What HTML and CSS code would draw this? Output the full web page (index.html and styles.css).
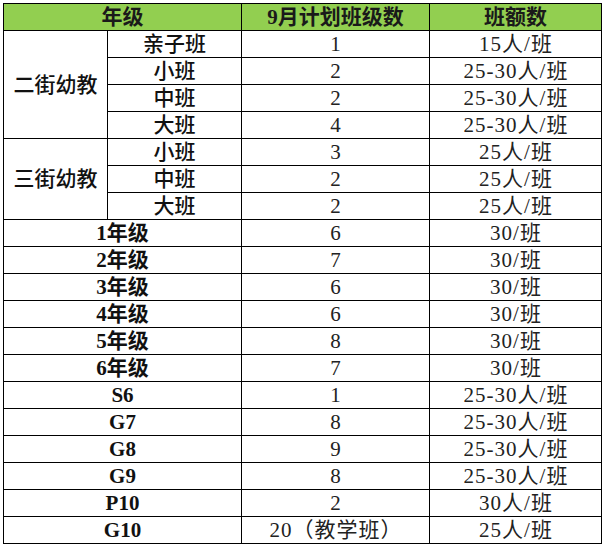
FILE: index.html
```html
<!DOCTYPE html>
<html lang="zh-CN">
<head>
<meta charset="utf-8">
<title>班级计划</title>
<link rel="stylesheet" href="styles.css">
</head>
<body>
<div class="sheet" role="table">
  <div class="cell head span2">年级</div>
  <div class="cell head">9月计划班级数</div>
  <div class="cell head">班额数</div>

  <div class="cell group r4">二街幼教</div>
  <div class="cell sub">亲子班</div><div class="cell num">1</div><div class="cell num">15人/班</div>
  <div class="cell sub">小班</div><div class="cell num">2</div><div class="cell num">25-30人/班</div>
  <div class="cell sub">中班</div><div class="cell num">2</div><div class="cell num">25-30人/班</div>
  <div class="cell sub">大班</div><div class="cell num">4</div><div class="cell num">25-30人/班</div>

  <div class="cell group r3">三街幼教</div>
  <div class="cell sub">小班</div><div class="cell num">3</div><div class="cell num">25人/班</div>
  <div class="cell sub">中班</div><div class="cell num">2</div><div class="cell num">25人/班</div>
  <div class="cell sub">大班</div><div class="cell num">2</div><div class="cell num">25人/班</div>

  <div class="cell grade span2">1年级</div><div class="cell num">6</div><div class="cell num">30/班</div>
  <div class="cell grade span2">2年级</div><div class="cell num">7</div><div class="cell num">30/班</div>
  <div class="cell grade span2">3年级</div><div class="cell num">6</div><div class="cell num">30/班</div>
  <div class="cell grade span2">4年级</div><div class="cell num">6</div><div class="cell num">30/班</div>
  <div class="cell grade span2">5年级</div><div class="cell num">8</div><div class="cell num">30/班</div>
  <div class="cell grade span2">6年级</div><div class="cell num">7</div><div class="cell num">30/班</div>
  <div class="cell grade span2">S6</div><div class="cell num">1</div><div class="cell num">25-30人/班</div>
  <div class="cell grade span2">G7</div><div class="cell num">8</div><div class="cell num">25-30人/班</div>
  <div class="cell grade span2">G8</div><div class="cell num">9</div><div class="cell num">25-30人/班</div>
  <div class="cell grade span2">G9</div><div class="cell num">8</div><div class="cell num">25-30人/班</div>
  <div class="cell grade span2">P10</div><div class="cell num">2</div><div class="cell num">30人/班</div>
  <div class="cell grade span2">G10</div><div class="cell num">20（教学班）</div><div class="cell num">25人/班</div>
</div>
</body>
</html>
```

FILE: styles.css
```css
html, body {
  margin: 0;
  padding: 0;
  background: #ffffff;
}

body {
  padding: 3px 0 0 3px;
  font-family: "Liberation Serif", "Noto Sans CJK SC", serif;
  color: #111111;
}

.sheet {
  display: grid;
  grid-template-columns: 103px 133px 187px 171px;
  grid-auto-rows: 26px;
  gap: 1px;
  padding: 1px;
  background: #000000;
  width: max-content;
}

.cell {
  background: #ffffff;
  display: flex;
  align-items: center;
  justify-content: center;
  padding-top: 1px;
  font-size: 21px;
  line-height: 25px;
  white-space: nowrap;
  overflow: hidden;
}

.head {
  background: #92cf50;
  font-weight: bold;
  color: #1a1a1a;
}

.span2 {
  grid-column: span 2;
}

.r4 {
  grid-row: span 4;
}

.r3 {
  grid-row: span 3;
}

.group,
.sub {
  font-weight: 500;
}

.grade {
  font-weight: bold;
}

.num {
  font-weight: normal;
  color: #222222;
  letter-spacing: 1px;
  text-indent: 1px;
}
```
